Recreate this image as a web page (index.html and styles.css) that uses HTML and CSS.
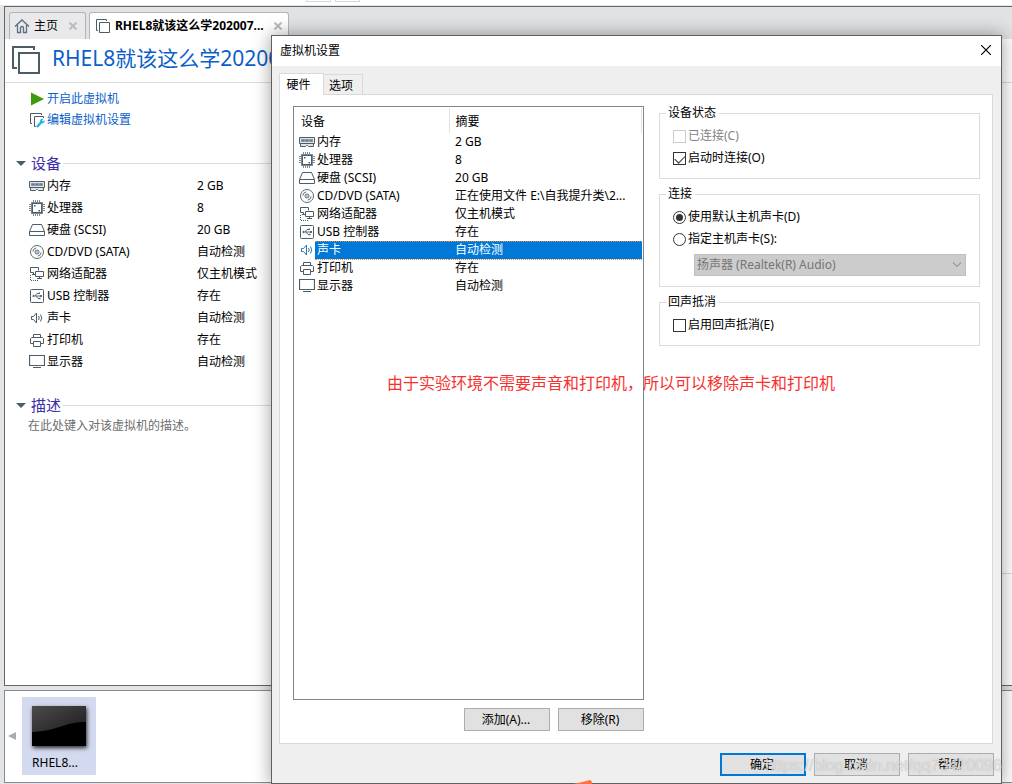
FILE: index.html
```html
<!DOCTYPE html>
<html lang="zh-CN">
<head>
    <meta charset="UTF-8">
    <meta name="viewport" content="width=device-width, initial-scale=1.0">
    <title>虚拟机设置</title>
    <link rel="stylesheet" href="styles.css">
</head>
<body>
    <!-- Shared icons -->
    <svg class="sprite" aria-hidden="true">
        <symbol id="i-memory" viewBox="0 0 16 16">
            <path d="M.5 3.500h15v6h-15zM1.500 9.500v3h5l1-1h1l1 1h5v-3" fill="#dfe6ea" stroke="#4b5d69"/>
            <path d="M2.500 5.500h3v2h-3zM6.500 5.500h3v2h-3zM10.500 5.500h3v2h-3z" fill="#6d7e89" stroke="#6d7e89" stroke-width=".6"/>
        </symbol>
        <symbol id="i-cpu" viewBox="0 0 16 16">
            <path d="M4.500 0v3M6.500 0v3M8.500 0v3M10.500 0v3M4.500 13v3M6.500 13v3M8.500 13v3M10.500 13v3M0 4.500h3M0 6.500h3M0 8.500h3M0 10.500h3M13 4.500h3M13 6.500h3M13 8.500h3M13 10.500h3" stroke="#7d8a93"/>
            <rect x="2.500" y="2.500" width="11" height="11" fill="#fff" stroke="#7d8a93"/>
            <rect x="3.500" y="3.500" width="9" height="9" fill="#fff" stroke="#4b5d69"/>
            <path d="M5 5h1.500v1.500H5zM9.500 10H11v1.500H9.500z" fill="#4b5d69"/>
        </symbol>
        <symbol id="i-disk" viewBox="0 0 16 16">
            <path d="M3.500 2.500h9l3 7v4H.5v-4zM.5 9.500h15" fill="none" stroke="#4b5d69"/>
        </symbol>
        <symbol id="i-cd" viewBox="0 0 16 16">
            <circle cx="8" cy="8" r="6.500" fill="none" stroke="#5b6a75"/>
            <circle cx="8" cy="8" r="2" fill="none" stroke="#5b6a75"/>
            <circle cx="8" cy="8" r=".7" fill="#4b5d69"/>
            <path d="M3.800 7.500a4.200 4.200 0 0 1 3.400-3.600M12.200 8.500a4.200 4.200 0 0 1-3.400 3.600" fill="none" stroke="#5b6a75"/>
        </symbol>
        <symbol id="i-net" viewBox="0 0 16 16">
            <path d="M4.500 6.500h-3v-5h8v3" fill="none" stroke="#4b5d69"/>
            <path d="M6.500 5.500h8v5h-8zM10.500 10.500v2M8 12.500h5M3 8.500h3M4.500 6.500v2" fill="none" stroke="#4b5d69"/>
            <path d="M1.500 9v6M2 14.500h7" fill="none" stroke="#4b5d69" stroke-dasharray="1 1"/>
        </symbol>
        <symbol id="i-usb" viewBox="0 0 16 16">
            <rect x="1.500" y="1.500" width="13" height="13" rx="1" fill="none" stroke="#4b5d69"/>
            <path d="M4 8h8M6 8l2-2.500h2M7 8l2 2.500h1.500" fill="none" stroke="#5b6a75"/>
            <path d="M3 8l2-1.500v3zM11 7h2v2h-2zM9.500 4.500h1.500v1.500H9.500zM10 9.700h1.500v1.500H10z" fill="#5b6a75"/>
        </symbol>
        <symbol id="i-sound" viewBox="0 0 16 16">
            <path d="M2.500 6.500h2l3-3.500v10l-3-3.500h-2z" fill="none" stroke="currentColor"/>
            <path d="M9.500 6q1.500 2 0 4M11.500 4.500q2.500 3.500 0 7" fill="none" stroke="currentColor"/>
        </symbol>
        <symbol id="i-printer" viewBox="0 0 16 16">
            <path d="M4.500 5.500v-3h7v3M4.500 11.500h-3v-5l1-1h11l1 1v5h-3M4.500 9.500h7v5h-7z" fill="none" stroke="#4b5d69"/>
        </symbol>
        <symbol id="i-display" viewBox="0 0 16 16">
            <path d="M.5 1.500h15v10H.5z" fill="none" stroke="#4b5d69" stroke-width="1.200"/>
            <path d="M4 13.500h8" stroke="#4b5d69"/>
        </symbol>
        <symbol id="i-vm" viewBox="0 0 28 28">
            <path d="M5 22H1V1h21v3" fill="none" stroke="#4b5d69" stroke-width="2"/>
            <rect x="7" y="7" width="20" height="20" fill="#fff" stroke="#4b5d69" stroke-width="2"/>
        </symbol>
    </svg>

    <div class="toolbar-edge"><span></span><span></span></div>

    <main class="workspace">
        <nav class="tabs">
            <a class="tab" href="#home">
                <svg class="tab-icon" viewBox="0 0 16 16"><path d="M1 8.500L8 2l7 6.500M3.500 7v7.500h3V10a1.500 1.500 0 0 1 3 0v4.500h3V7" fill="none" stroke="#5b6f7e" stroke-width="1.300"/></svg>
                <span class="tab-name">主页</span>
                <svg class="tab-close" viewBox="0 0 8 8"><path d="M.5.5l7 7M7.500.5l-7 7" stroke="#bcbcbc" stroke-width="2"/></svg>
            </a>
            <a class="tab current" href="#rhel8">
                <svg class="tab-icon" viewBox="0 0 16 16"><path d="M3 12.500H1.500v-11h10V3M4.500 4.500h10v10h-10z" fill="none" stroke="#4b5d69"/></svg>
                <span class="tab-name">RHEL8就该这么学202007...</span>
                <svg class="tab-close" viewBox="0 0 8 8"><path d="M.5.5l7 7M7.500.5l-7 7" stroke="#bcbcbc" stroke-width="2"/></svg>
            </a>
        </nav>

        <header class="vm-header">
            <svg class="vm-icon"><use href="#i-vm"/></svg>
            <h1>RHEL8就该这么学202007</h1>
        </header>

        <div class="vm-body">
            <div class="vm-info">
                <div class="commands">
                    <a href="#start"><svg class="icon" viewBox="0 0 16 16"><path d="M2 1.500L15 8 2 14.500z" fill="#3f9b0b"/></svg>开启此虚拟机</a>
                    <a href="#edit"><svg class="icon" viewBox="0 0 16 16"><path d="M3 11.500H1.500v-10h11V3M7 14.500H5.500v-10h9V6" fill="none" stroke="#4b5d69"/><path d="M8 15l4.500-5" stroke="#18b4dc" stroke-width="2.200"/><path d="M11 9a2.500 2.500 0 0 1 3.500-2L13 8.500l1 1L15.500 8a2.500 2.500 0 0 1-3.500 3z" fill="#18b4dc"/></svg>编辑虚拟机设置</a>
                </div>

                <section class="devices">
                    <h2>设备</h2>
                    <table class="summary">
                        <tr><td><svg class="icon"><use href="#i-memory"/></svg></td><th scope="row">内存</th><td>2 GB</td></tr>
                        <tr><td><svg class="icon"><use href="#i-cpu"/></svg></td><th scope="row">处理器</th><td>8</td></tr>
                        <tr><td><svg class="icon"><use href="#i-disk"/></svg></td><th scope="row">硬盘 (SCSI)</th><td>20 GB</td></tr>
                        <tr><td><svg class="icon"><use href="#i-cd"/></svg></td><th scope="row">CD/DVD (SATA)</th><td>自动检测</td></tr>
                        <tr><td><svg class="icon"><use href="#i-net"/></svg></td><th scope="row">网络适配器</th><td>仅主机模式</td></tr>
                        <tr><td><svg class="icon"><use href="#i-usb"/></svg></td><th scope="row">USB 控制器</th><td>存在</td></tr>
                        <tr><td><svg class="icon"><use href="#i-sound"/></svg></td><th scope="row">声卡</th><td>自动检测</td></tr>
                        <tr><td><svg class="icon"><use href="#i-printer"/></svg></td><th scope="row">打印机</th><td>存在</td></tr>
                        <tr><td><svg class="icon"><use href="#i-display"/></svg></td><th scope="row">显示器</th><td>自动检测</td></tr>
                    </table>
                </section>

                <section class="description">
                    <h2>描述</h2>
                    <p>在此处键入对该虚拟机的描述。</p>
                </section>
            </div>
            <aside class="vm-preview"></aside>
        </div>
    </main>

    <footer class="thumbs">
        <svg class="scroll-left" viewBox="0 0 8 8"><path d="M8 0v8L0 4z" fill="#a3adb5"/></svg>
        <a class="thumb" href="#rhel8">
            <svg class="screen" viewBox="0 0 54 40" preserveAspectRatio="none">
                <defs><linearGradient id="gloss" x1="0" y1="0" x2="1" y2="1"><stop offset="0" stop-color="#4c4c4c"/><stop offset="1" stop-color="#1c1c1c"/></linearGradient></defs>
                <path d="M0 0h54v40H0z" fill="#000"/>
                <path d="M0 0h54v16C32 16 26 25 0 26z" fill="url(#gloss)"/>
            </svg>
            <span>RHEL8...</span>
        </a>
    </footer>

    <!-- Settings dialog -->
    <div class="dialog" role="dialog" aria-labelledby="dialogTitle">
        <div class="titlebar">
            <span id="dialogTitle">虚拟机设置</span>
            <button type="button" class="close" aria-label="关闭"><svg viewBox="0 0 10 10"><path d="M0 0l10 10M10 0L0 10" stroke="#000" stroke-width="1.200"/></svg></button>
        </div>

        <div class="dialog-tabs" role="tablist">
            <button type="button" role="tab" class="active" aria-selected="true">硬件</button>
            <button type="button" role="tab" aria-selected="false">选项</button>
        </div>

        <div class="panel">
            <div class="hardware">
                <div class="list">
                    <table>
                        <colgroup><col class="col-icon"><col class="col-name"><col></colgroup>
                        <thead>
                            <tr><th colspan="2">设备</th><th>摘要</th></tr>
                        </thead>
                        <tbody>
                            <tr><td><svg class="icon"><use href="#i-memory"/></svg></td><td>内存</td><td>2 GB</td></tr>
                            <tr><td><svg class="icon"><use href="#i-cpu"/></svg></td><td>处理器</td><td>8</td></tr>
                            <tr><td><svg class="icon"><use href="#i-disk"/></svg></td><td>硬盘 (SCSI)</td><td>20 GB</td></tr>
                            <tr><td><svg class="icon"><use href="#i-cd"/></svg></td><td>CD/DVD (SATA)</td><td>正在使用文件 E:\自我提升类\2...</td></tr>
                            <tr><td><svg class="icon"><use href="#i-net"/></svg></td><td>网络适配器</td><td>仅主机模式</td></tr>
                            <tr><td><svg class="icon"><use href="#i-usb"/></svg></td><td>USB 控制器</td><td>存在</td></tr>
                            <tr class="selected"><td><svg class="icon"><use href="#i-sound"/></svg></td><td>声卡</td><td>自动检测</td></tr>
                            <tr><td><svg class="icon"><use href="#i-printer"/></svg></td><td>打印机</td><td>存在</td></tr>
                            <tr><td><svg class="icon"><use href="#i-display"/></svg></td><td>显示器</td><td>自动检测</td></tr>
                        </tbody>
                    </table>
                </div>
                <div class="actions">
                    <button type="button" class="btn">添加(A)...</button>
                    <button type="button" class="btn">移除(R)</button>
                </div>
            </div>

            <form class="options">
                <fieldset>
                    <legend>设备状态</legend>
                    <label class="disabled"><input type="checkbox" disabled>已连接(C)</label>
                    <label><input type="checkbox" checked>启动时连接(O)</label>
                </fieldset>
                <fieldset>
                    <legend>连接</legend>
                    <label><input type="radio" name="card" checked>使用默认主机声卡(D)</label>
                    <label><input type="radio" name="card">指定主机声卡(S):</label>
                    <div class="select">
                        <select aria-label="主机声卡" disabled><option>扬声器 (Realtek(R) Audio)</option></select>
                        <svg viewBox="0 0 10 6"><path d="M1 .5l4 4 4-4" fill="none" stroke="#9a9a9a" stroke-width="1.200"/></svg>
                    </div>
                </fieldset>
                <fieldset>
                    <legend>回声抵消</legend>
                    <label><input type="checkbox">启用回声抵消(E)</label>
                </fieldset>
            </form>

            <p class="note">由于实验环境不需要声音和打印机，所以可以移除声卡和打印机</p>
        </div>

        <div class="dialog-footer">
            <button type="button" class="btn default">确定</button>
            <button type="button" class="btn">取消</button>
            <button type="button" class="btn">帮助</button>
        </div>
    </div>

    <svg class="marker" viewBox="0 0 20 4"><path d="M0 4q8-1.500 17-4 2 .5 2 4z" fill="#ff7043"/></svg>
    <span class="watermark">https://blog.csdn.net/qq73420096</span>
</body>
</html>
```
FILE: styles.css
```css
* {
    box-sizing: border-box;
}

body {
    position: relative;
    display: flex;
    flex-direction: column;
    min-height: 100vh;
    margin: 0;
    padding-bottom: 1px;
    overflow: hidden;
    background: #e3e4e6;
    color: #000;
    font-family: "Noto Sans", "Noto Sans CJK SC", sans-serif;
    font-size: 12px;
    line-height: 16px;
    white-space: nowrap;
}

h1, h2, p {
    margin: 0;
    font-weight: normal;
}

a {
    color: #0b5fc9;
    text-decoration: none;
}

button, select, input {
    margin: 0;
    font: inherit;
}

table {
    border-collapse: collapse;
    table-layout: fixed;
}

th, td {
    padding: 0;
    font-weight: normal;
    text-align: left;
}

.sprite {
    position: absolute;
    width: 0;
    height: 0;
}

.icon {
    display: block;
    flex: none;
    width: 16px;
    height: 16px;
    color: #4b5d69;
}

.toolbar-edge {
    display: flex;
    flex: none;
    gap: 4px;
    height: 6px;
    padding-left: 306px;
    background: #fff;
    border-bottom: 1px solid #e3e4e6;
}

.toolbar-edge span {
    width: 25px;
    height: 2px;
    border: 1px solid #d8d8d8;
    border-top: 0;
}

/* Main window */
.workspace {
    display: flex;
    flex: 1;
    flex-direction: column;
    margin-left: 4px;
    background: #fff;
    border: 1px solid #666;
    border-right: 0;
}

.tabs {
    display: flex;
    align-items: flex-end;
    gap: 3px;
    height: 32px;
    padding-left: 4px;
    background: #e1e2e4;
}

.tab {
    display: flex;
    align-items: center;
    width: 77px;
    height: 27px;
    padding: 0 8px 0 4px;
    background: #e9e9eb;
    border: 1px solid #b2b4b8;
    border-bottom: 0;
    border-radius: 3px 3px 0 0;
    color: #000;
}

.tab.current {
    width: 200px;
    padding: 0 6px 0 5px;
    background: #fff;
    font-weight: bold;
}

.tab-icon {
    width: 16px;
    height: 16px;
    margin-right: 4px;
}

.tab-name {
    flex: 1;
}

.tab-close {
    width: 8px;
    height: 8px;
}

.vm-header {
    display: flex;
    align-items: flex-start;
    gap: 12px;
    height: 44px;
    padding: 7px 0 0 7px;
    border-bottom: 1px solid #dcdcdc;
}

.vm-icon {
    width: 28px;
    height: 28px;
}

.vm-header h1 {
    color: #0b5fc9;
    font-size: 21px;
    line-height: 24px;
}

.vm-body {
    display: flex;
    flex: 1;
}

.vm-info {
    flex: 1;
}

.vm-preview {
    flex: 1;
    margin-bottom: 111px;
    border-bottom: 1px solid #dcdcdc;
}

.commands {
    padding: 5px 0 0 24px;
}

.commands a {
    display: flex;
    align-items: center;
    gap: 2px;
    height: 21px;
}

h2 {
    display: flex;
    align-items: center;
    gap: 2px;
    height: 22px;
    color: #3b2fa8;
    font-size: 15px;
}

h2::before {
    content: "";
    margin-right: 3px;
    border: 5px solid transparent;
    border-top-color: #4b5d69;
    border-bottom: 0;
}

h2::after {
    content: "";
    flex: 1;
    height: 1px;
    background: #dcdcdc;
}

.devices {
    padding: 22px 0 0 11px;
}

.summary {
    width: 100%;
    margin: 1px 0 0 13px;
}

.summary tr {
    height: 22px;
}

.summary td:first-child {
    width: 18px;
}

.summary th {
    width: 150px;
}

.description {
    padding: 21px 0 0 11px;
}

.description p {
    padding: 2px 0 0 12px;
    color: #6d6d6d;
}

/* Thumbnail bar */
.thumbs {
    display: flex;
    flex: none;
    gap: 6px;
    height: 93px;
    margin: 4px 0 0 4px;
    padding: 6px 0 0 3px;
    background: #fff;
    border: 1px solid #858a95;
    border-right: 0;
}

.scroll-left {
    width: 8px;
    height: 78px;
}

.thumb {
    display: flex;
    flex-direction: column;
    align-items: center;
    gap: 9px;
    width: 74px;
    height: 78px;
    padding-top: 9px;
    background: #d3d9ee;
    color: #000;
}

.thumb span {
    padding-right: 8px;
}

.screen {
    width: 54px;
    height: 40px;
    box-shadow: 1px 2px 4px rgba(0, 0, 0, 0.8);
}

/* Dialog */
.dialog {
    position: absolute;
    top: 35px;
    right: 10px;
    bottom: 0;
    left: 271px;
    display: flex;
    flex-direction: column;
    background: #efefef;
    border: 1px solid #5f6062;
    box-shadow: 0 0 16px 1px rgba(0, 0, 0, 0.35);
}

.titlebar {
    display: flex;
    align-items: center;
    justify-content: space-between;
    height: 30px;
    padding: 0 9px 0 8px;
    background: #fff;
}

.close {
    width: 12px;
    height: 12px;
    padding: 0 1px 2px;
    background: none;
    border: 0;
}

.close svg {
    display: block;
    width: 10px;
    height: 10px;
}

.dialog-tabs {
    display: flex;
    align-items: flex-end;
    height: 28px;
    padding-left: 7px;
}

.dialog-tabs button {
    width: 39px;
    height: 20px;
    padding: 2px 4px 0 0;
    background: #efefef;
    border: 1px solid #d9d9d9;
    border-width: 1px 1px 0 0;
    line-height: 16px;
}

.dialog-tabs .active {
    z-index: 1;
    width: 45px;
    height: 22px;
    margin-bottom: -1px;
    padding: 0 6px 0 0;
    background: #fff;
    border-left-width: 1px;
}

.panel {
    position: relative;
    display: flex;
    flex: 1;
    gap: 15px;
    margin: 0 8px 0 7px;
    padding: 11px 12px 12px 13px;
    background: #fff;
    border: 1px solid #d9d9d9;
}

.hardware {
    display: flex;
    flex: 351;
    flex-direction: column;
    gap: 8px;
}

.list {
    flex: 1;
    padding: 1px;
    border: 1px solid #82848c;
}

.list table {
    width: 100%;
}

.col-icon {
    width: 20px;
}

.col-name {
    width: 134px;
}

.list th {
    height: 25px;
    padding: 2px 0 0 6px;
    border-right: 1px solid #e2e2e2;
}

.list td {
    height: 18px;
    padding: 0 0 0 6px;
    line-height: 16px;
}

.list td:first-child {
    padding-left: 4px;
}

.list td:nth-child(2) {
    padding-left: 2px;
}

.list .selected td:not(:first-child) {
    background: #0078d7;
    border: 1px dotted #e08a3c;
    border-width: 1px 0;
    color: #fff;
}

.list .selected .icon {
    color: #2b78b5;
}

.actions {
    display: flex;
    justify-content: flex-end;
    gap: 8px;
}

.btn {
    width: 86px;
    height: 23px;
    padding: 0 2px 0 0;
    background: #e1e1e1;
    border: 1px solid #adadad;
}

.btn.default {
    border: 2px solid #0078d7;
}

.options {
    display: flex;
    flex: 321;
    flex-direction: column;
    gap: 7px;
    margin-top: -1px;
}

fieldset {
    min-width: 0;
    margin: 0;
    padding: 4px 13px 9px 13px;
    border: 1px solid #dcdcdc;
}

legend {
    margin-left: -7px;
    padding: 0 3px 0 2px;
}

label {
    display: flex;
    align-items: center;
    gap: 2px;
    height: 22px;
}

label.disabled {
    color: #838383;
}

input {
    appearance: none;
    width: 13px;
    height: 13px;
    background: #fff;
    border: 1px solid #333;
}

input:disabled {
    border-color: #ccc;
}

input[type="checkbox"]:checked::before {
    content: "";
    display: block;
    width: 9px;
    height: 5px;
    margin: 2px 1px;
    border: 1px solid #333;
    border-width: 0 0 1px 1px;
    transform: rotate(-45deg);
}

input[type="radio"] {
    border-radius: 50%;
}

input[type="radio"]:checked::before {
    content: "";
    display: block;
    width: 7px;
    height: 7px;
    margin: 2px;
    background: #333;
    border-radius: 50%;
}

.select {
    position: relative;
    height: 22px;
    margin: 4px 0 1px 21px;
}

.select select {
    appearance: none;
    width: 100%;
    height: 22px;
    padding: 0 2px;
    background: #ccc;
    border: 1px solid #bfbfbf;
    border-radius: 0;
    color: #757575;
    opacity: 1;
}

.select svg {
    position: absolute;
    top: 8px;
    right: 4px;
    width: 10px;
    height: 6px;
}

.note {
    position: absolute;
    top: 276px;
    left: 107px;
    color: #f8302e;
    font-size: 16px;
    line-height: 24px;
}

.dialog-footer {
    display: flex;
    justify-content: flex-end;
    gap: 8px;
    padding: 9px 7px 7px;
}

.marker {
    position: absolute;
    bottom: 0;
    left: 573px;
    width: 20px;
    height: 4px;
}

.watermark {
    position: absolute;
    right: 10px;
    bottom: 8px;
    color: rgba(240, 240, 240, 0.75);
    font-family: "Liberation Sans", sans-serif;
    font-size: 16px;
    line-height: 20px;
    text-shadow: 0 0 1px rgba(120, 120, 120, 0.6);
    pointer-events: none;
}
```
